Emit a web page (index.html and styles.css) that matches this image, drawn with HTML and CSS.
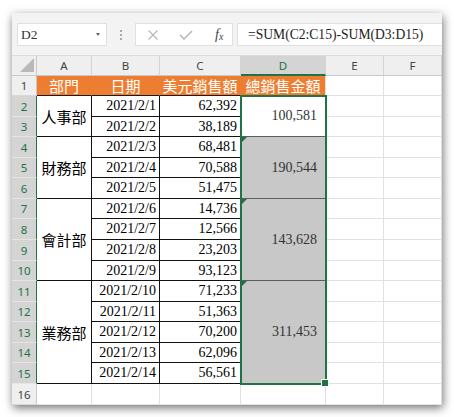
FILE: index.html
```html
<!DOCTYPE html>
<html lang="zh-Hant">
<head>
<meta charset="utf-8">
<title>Excel</title>
<link rel="stylesheet" href="styles.css">
</head>
<body>
<div class="window">
  <div class="toolbar">
    <div class="namebox"><span>D2</span><span class="arrow"></span></div>
    <div class="sep"><i></i><i></i><i></i></div>
    <div class="fxbox">
      <svg class="ico" width="12" height="12" viewBox="0 0 12 12"><path d="M1.5 1.5 L10.5 10.5 M10.5 1.5 L1.5 10.5" stroke="#b8b8b8" stroke-width="1.2" fill="none"/></svg>
      <svg class="ico" width="14" height="10" viewBox="0 0 14 10"><path d="M1 5 L5 9 L13 1" stroke="#b8b8b8" stroke-width="1.6" fill="none"/></svg>
      <span class="fx">f<sub>x</sub></span>
    </div>
    <div class="formula">=SUM(C2:C15)-SUM(D3:D15)</div>
  </div>
  <div class="sheet">
    <div class="corner"></div>
    <div class="ch">A</div>
    <div class="ch">B</div>
    <div class="ch">C</div>
    <div class="ch sel">D</div>
    <div class="ch">E</div>
    <div class="ch">F</div>

    <div class="rh">1</div>
    <div class="hd">部門</div>
    <div class="hd">日期</div>
    <div class="hd">美元銷售額</div>
    <div class="hd last">總銷售金額</div>
    <div class="c"></div>
    <div class="c"></div>

    <div class="rh sel">2</div>
    <div class="t dept r2">人事部</div>
    <div class="t num">2021/2/1</div>
    <div class="t num">62,392</div>
    <div class="tot r2">100,581</div>
    <div class="c"></div>
    <div class="c"></div>

    <div class="rh sel">3</div>
    <div class="t num">2021/2/2</div>
    <div class="t num">38,189</div>
    <div class="c"></div>
    <div class="c"></div>

    <div class="rh sel">4</div>
    <div class="t dept r3">財務部</div>
    <div class="t num">2021/2/3</div>
    <div class="t num">68,481</div>
    <div class="tot shade err r3">190,544</div>
    <div class="c"></div>
    <div class="c"></div>

    <div class="rh sel">5</div>
    <div class="t num">2021/2/4</div>
    <div class="t num">70,588</div>
    <div class="c"></div>
    <div class="c"></div>

    <div class="rh sel">6</div>
    <div class="t num">2021/2/5</div>
    <div class="t num">51,475</div>
    <div class="c"></div>
    <div class="c"></div>

    <div class="rh sel">7</div>
    <div class="t dept r4">會計部</div>
    <div class="t num">2021/2/6</div>
    <div class="t num">14,736</div>
    <div class="tot shade err r4">143,628</div>
    <div class="c"></div>
    <div class="c"></div>

    <div class="rh sel">8</div>
    <div class="t num">2021/2/7</div>
    <div class="t num">12,566</div>
    <div class="c"></div>
    <div class="c"></div>

    <div class="rh sel">9</div>
    <div class="t num">2021/2/8</div>
    <div class="t num">23,203</div>
    <div class="c"></div>
    <div class="c"></div>

    <div class="rh sel">10</div>
    <div class="t num">2021/2/9</div>
    <div class="t num">93,123</div>
    <div class="c"></div>
    <div class="c"></div>

    <div class="rh sel">11</div>
    <div class="t dept r5">業務部</div>
    <div class="t num">2021/2/10</div>
    <div class="t num">71,233</div>
    <div class="tot shade err r5">311,453</div>
    <div class="c"></div>
    <div class="c"></div>

    <div class="rh sel">12</div>
    <div class="t num">2021/2/11</div>
    <div class="t num">51,363</div>
    <div class="c"></div>
    <div class="c"></div>

    <div class="rh sel">13</div>
    <div class="t num">2021/2/12</div>
    <div class="t num">70,200</div>
    <div class="c"></div>
    <div class="c"></div>

    <div class="rh sel">14</div>
    <div class="t num">2021/2/13</div>
    <div class="t num">62,096</div>
    <div class="c"></div>
    <div class="c"></div>

    <div class="rh sel">15</div>
    <div class="t num">2021/2/14</div>
    <div class="t num">56,561</div>
    <div class="c"></div>
    <div class="c"></div>

    <div class="rh">16</div>
    <div class="c"></div>
    <div class="c"></div>
    <div class="c"></div>
    <div class="c"></div>
    <div class="c"></div>
    <div class="c"></div>

    <div class="selection"></div>
  </div>
</div>
</body>
</html>
```
FILE: styles.css
```css
* { box-sizing: border-box; }
html, body { margin: 0; padding: 0; background: #ffffff; }
body { width: 454px; height: 417px; overflow: hidden; }

.window {
  margin: 13px 12px 0 12px;
  width: 430px;
  height: 392px;
  background: #ffffff;
  box-shadow: 1px 3px 9px rgba(0,0,0,0.55);
  overflow: hidden;
}

.toolbar {
  height: 43px;
  background: #f3f3f3;
  border-bottom: 1px solid #dcdcdc;
  display: flex;
  align-items: flex-start;
  padding: 10px 0 0 5px;
}
.namebox {
  width: 90px;
  height: 23px;
  background: #fff;
  border: 1px solid #e0e0e0;
  display: flex;
  align-items: center;
  justify-content: space-between;
  padding: 0 6px 0 3px;
  font-family: "Liberation Serif", serif;
  font-size: 13.5px;
  color: #333;
}
.arrow {
  width: 0; height: 0;
  border-left: 2.5px solid transparent;
  border-right: 2.5px solid transparent;
  border-top: 3px solid #666;
}
.sep {
  width: 28px;
  height: 23px;
  display: flex;
  flex-direction: column;
  align-items: center;
  justify-content: center;
  gap: 2px;
}
.sep i {
  display: block;
  width: 2px;
  height: 2px;
  background: #a8a8a8;
}
.fxbox {
  width: 98px;
  height: 23px;
  background: #fff;
  border: 1px solid #e0e0e0;
  display: flex;
  align-items: center;
  padding: 0 0 0 11px;
  gap: 18px;
}
.ico { display: block; }
.fxbox .ico:nth-child(2) { margin-left: 2px; }
.fx {
  font-family: "Liberation Serif", serif;
  font-style: italic;
  font-size: 14px;
  color: #444;
  margin-left: 4px;
}
.fx sub { font-size: 10px; vertical-align: -1px; }
.formula {
  margin-left: 4px;
  flex: 1;
  height: 23px;
  background: #fff;
  border: 1px solid #e0e0e0;
  border-right: none;
  padding-left: 10px;
  display: flex;
  align-items: center;
  font-family: "Liberation Serif", serif;
  font-size: 13.6px;
  color: #222;
}

.sheet {
  position: relative;
  display: grid;
  grid-template-columns: 25px 55px 68px 81px 85px 58px 58px;
  grid-template-rows: 20px 20px 21px 20px 21px 20px 21px 20px 21px 21px 20px 21px 20px 21px 20px 21px 21px;
  font-family: "Liberation Serif", "Noto Sans CJK TC", serif;
  font-size: 14px;
  color: #000;
}
.sheet > div { min-width: 0; }

.corner {
  position: relative;
  background: #efefef;
  border-right: 1px solid #c8c8c8;
  border-bottom: 1px solid #c8c8c8;
}
.corner::after {
  content: "";
  position: absolute;
  right: 2px;
  bottom: 3px;
  width: 14px;
  height: 14px;
  background: #b9b9b9;
  clip-path: polygon(100% 0, 100% 100%, 0 100%);
}

.ch, .rh {
  font-family: "Noto Sans", "Open Sans", sans-serif;
  font-size: 11.5px;
  color: #444;
  background: #efefef;
  display: flex;
  align-items: center;
  justify-content: center;
}
.ch {
  border-right: 1px solid #d4d4d4;
  border-bottom: 1px solid #c8c8c8;
}
.ch.sel {
  background: #d4d4d4;
  color: #217346;
  border-bottom: 2px solid #217346;
}
.rh {
  border-right: 1px solid #c8c8c8;
  border-bottom: 1px solid #d8d8d8;
}
.rh.sel {
  background: #d4d4d4;
  color: #217346;
  border-right: 1px solid #217346;
  border-bottom: 1px solid #e4e4e4;
}

.hd {
  background: #ed7d31;
  color: #fff;
  font-family: "Noto Sans CJK TC", sans-serif;
  font-size: 15px;
  display: flex;
  align-items: center;
  justify-content: center;
  border-right: 1px solid #ed7d31;
  border-bottom: 1px solid #1a1a1a;
  white-space: nowrap;
  letter-spacing: 0;
}
.hd.last { border-right-color: #e1e1e1; }

.c {
  border-right: 1px solid #e1e1e1;
  border-bottom: 1px solid #e1e1e1;
}

.t {
  border-right: 1px solid #111;
  border-bottom: 1px solid #111;
  display: flex;
  align-items: center;
  white-space: nowrap;
}
.num {
  justify-content: flex-end;
  padding-right: 3px;
}
.dept {
  justify-content: center;
  font-family: "Noto Sans CJK TC", sans-serif;
  font-size: 15px;
}

.r2 { grid-row: span 2; }
.r3 { grid-row: span 3; }
.r4 { grid-row: span 4; }
.r5 { grid-row: span 5; }

.tot {
  position: relative;
  display: flex;
  align-items: center;
  justify-content: flex-end;
  padding-right: 8px;
  color: #333;
  border-right: 1px solid #e1e1e1;
  border-bottom: 1px solid #5e5e5e;
  background: #fff;
}
.tot.shade { background: #c8c8c8; }
.tot.err::before {
  content: "";
  position: absolute;
  top: 0;
  left: 1px;
  width: 5px;
  height: 5px;
  background: #1e7145;
  clip-path: polygon(0 0, 100% 0, 0 100%);
}

.selection {
  position: absolute;
  grid-column: 5 / 6;
  grid-row: 3 / 17;
  top: -1px;
  left: -1px;
  right: -1px;
  bottom: -1px;
  border: 2px solid #217346;
  pointer-events: none;
}
.selection::after {
  content: "";
  position: absolute;
  right: -4px;
  bottom: -4px;
  width: 6px;
  height: 6px;
  background: #217346;
  border: 1px solid #fff;
}
```
